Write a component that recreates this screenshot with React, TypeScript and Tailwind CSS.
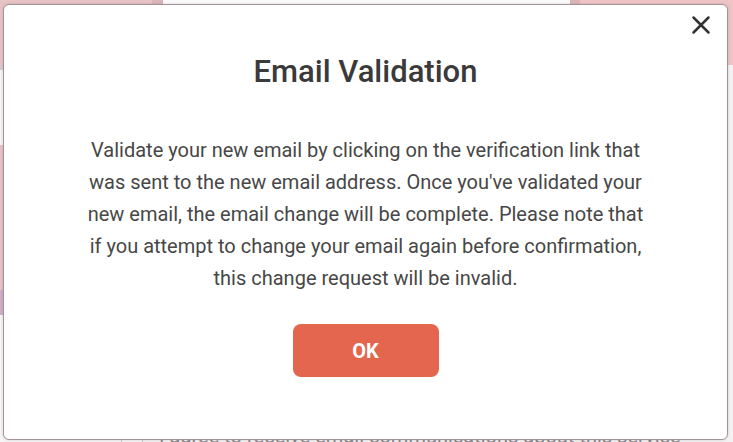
import { X } from 'lucide-react'

function BackgroundPage() {
  return (
    <div className="flex h-full w-full flex-col bg-[#f4f1f2]">
      {/* шапка */}
      <div className="flex h-[65px] w-full">
        <div className="w-[152px] bg-[#e8c3c5]" />
        <div className="w-[11px] bg-[#ddb4b8]" />
        <div className="flex-1 bg-[#fbfafa]" />
        <div className="w-[10px] bg-[#ddb4b8]" />
        <div className="w-[153px] bg-[#eec4c5]" />
      </div>
      <div className="flex flex-1">
        {/* левая колонка */}
        <div className="flex w-[122px] flex-col border-r border-[#cfc8cc]">
          <div className="h-[5px] bg-[#dcc9cc]" />
          <div className="h-[75px] bg-[#f5f3f4]" />
          <div className="h-[145px] bg-[#e6c1c6]" />
          <div className="h-[25px] bg-[#cdb0c9]" />
          <div className="flex-1 bg-[#f6f4f5]" />
        </div>
        <div className="w-[21px] border-r border-[#cfc8cc] bg-[#f6f4f5]" />
        <div className="flex flex-1 flex-col justify-end pl-4">
          <p className="translate-y-[9px] text-[20px] text-[#8f8a8d]">
            I agree to receive email communications about this service
          </p>
        </div>
      </div>
    </div>
  )
}

export default function App() {
  return (
    <div
      className="relative h-[442px] w-[733px] overflow-hidden"
      style={{ fontFamily: 'Roboto, "Noto Sans", Arial, sans-serif' }}
    >
      <BackgroundPage />

      {/* модальное окно */}
      <div className="absolute left-[3px] top-[4px] flex h-[436px] w-[725px] flex-col items-center rounded-[6px] border border-[#a3919c] bg-white pt-[49px] shadow-[0_0_3px_rgba(0,0,0,0.15)]">
        <button className="absolute right-[11px] top-[5px] flex h-[30px] w-[30px] items-center justify-center text-[#333333]">
          <X className="h-[30px] w-[30px]" strokeWidth={2} />
        </button>

        <h2 className="text-[31px] leading-[36px] font-medium text-[#3a3a3a]">Email Validation</h2>

        <p className="mt-[44px] w-[570px] text-center text-[20px] leading-[32px] text-[#474747]">
          Validate your new email by clicking on the verification link that was sent to the new email address. Once
          you've validated your new email, the email change will be complete. Please note that if you attempt to
          change your email again before confirmation, this change request will be invalid.
        </p>

        <button className="mt-[30px] h-[53px] w-[146px] rounded-[8px] bg-[#e4664f] text-[20px] font-bold text-white">
          OK
        </button>
      </div>
    </div>
  )
}
